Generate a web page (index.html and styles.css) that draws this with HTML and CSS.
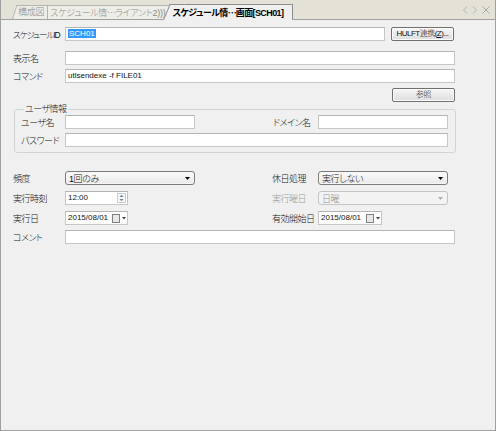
FILE: index.html
```html
<!DOCTYPE html>
<html lang="ja">
<head>
<meta charset="utf-8">
<title>スケジュール情報画面</title>
<link rel="stylesheet" href="styles.css">
</head>
<body>
<div class="frame">
  <div class="tabbar">
    <div class="tabs">
      <div class="tab tab-first">構成図</div>
      <div class="tab tab-second">スケジュール情<span class="ell">…</span>ライアント2)))</div>
      <div class="tab active">スケジュール情<span class="ell">…</span>画面[SCH01]</div>
    </div>
    <div class="tabctl">
      <svg width="30" height="10" viewBox="0 0 30 10">
        <path d="M5 1.5 L1.5 5 L5 8.5" fill="none" stroke="#b4b4b4" stroke-width="1"/>
        <path d="M11 1.5 L14.5 5 L11 8.5" fill="none" stroke="#b4b4b4" stroke-width="1"/>
        <path d="M20.5 1.5 L27.5 8.5 M27.5 1.5 L20.5 8.5" fill="none" stroke="#a8a8a8" stroke-width="1"/>
      </svg>
    </div>
  </div>

  <div class="content">
    <div class="row r1">
      <span class="lbl lbl-id">スケジュールID</span>
      <div class="field w-id"><span class="hl">SCH01</span></div>
      <div class="btn w-btn">HULFT連携(<u>Z</u>)...</div>
    </div>
    <div class="row r2">
      <span class="lbl">表示名</span>
      <div class="field w-full"></div>
    </div>
    <div class="row r3">
      <span class="lbl">コマンド</span>
      <div class="field w-full">utlsendexe -f FILE01</div>
    </div>
    <div class="row r4">
      <div class="btn w-btn">参照</div>
    </div>

    <fieldset class="group">
      <legend>ユーザ情報</legend>
      <div class="row">
        <span class="lbl lbl-in">ユーザ名</span>
        <div class="field w-half"></div>
        <span class="lbl lbl-right">ドメイン名</span>
        <div class="field w-half"></div>
      </div>
      <div class="row g2">
        <span class="lbl lbl-in">パスワード</span>
        <div class="field w-pass"></div>
      </div>
    </fieldset>

    <div class="sched">
      <span class="lbl">頻度</span>
      <div class="combo w-half"><span>1回のみ</span><svg class="arr" width="5" height="3" viewBox="0 0 5 3"><path d="M0 0H5L2.5 3Z" fill="#000"/></svg></div>
      <span class="lbl">休日処理</span>
      <div class="combo w-half"><span>実行しない</span><svg class="arr" width="5" height="3" viewBox="0 0 5 3"><path d="M0 0H5L2.5 3Z" fill="#000"/></svg></div>

      <span class="lbl">実行時刻</span>
      <div class="field w-small spin">
        <span>12:00</span>
        <svg width="9" height="10" viewBox="0 0 9 10"><rect x="0.5" y="0.5" width="8" height="9" fill="#f4f6f8" stroke="#c9d0d8"/><path d="M2.5 4H6.5L4.5 2Z M2.5 6H6.5L4.5 8Z" fill="#6c7f96"/></svg>
      </div>
      <span class="lbl dis">実行曜日</span>
      <div class="combo w-half disabled"><span>日曜</span><svg class="arr" width="5" height="3" viewBox="0 0 5 3"><path d="M0 0H5L2.5 3Z" fill="#b0b0b0"/></svg></div>

      <span class="lbl">実行日</span>
      <div class="field w-small date">
        <span>2015/08/01</span>
        <svg width="14" height="9" viewBox="0 0 14 9"><rect x="0.5" y="0.5" width="7" height="8" fill="#e8e8e8" stroke="#808080"/><path d="M10 3H14L12 5.5Z" fill="#404040"/></svg>
      </div>
      <span class="lbl">有効開始日</span>
      <div class="field w-date2 date">
        <span>2015/08/01</span>
        <svg width="14" height="9" viewBox="0 0 14 9"><rect x="0.5" y="0.5" width="7" height="8" fill="#e8e8e8" stroke="#808080"/><path d="M10 3H14L12 5.5Z" fill="#404040"/></svg>
      </div>
    </div>

    <div class="row r-comment">
      <span class="lbl">コメント</span>
      <div class="field w-full"></div>
    </div>
  </div>
</div>
</body>
</html>
```

FILE: styles.css
```css
* { box-sizing: border-box; }
html, body { margin: 0; padding: 0; }
body {
  width: 496px;
  height: 431px;
  overflow: hidden;
  background: #f0f0f0;
  font-family: "Liberation Sans", "Noto Sans CJK JP", sans-serif;
  font-size: 9px;
  font-weight: 300;
  color: #111;
  font-feature-settings: "palt";
}
.frame {
  width: 496px;
  height: 431px;
  border: 1px solid #a0a0a0;
  border-top: none;
  display: flex;
  flex-direction: column;
}

/* tab bar */
.tabbar {
  height: 20px;
  flex: none;
  background: #e4e1d6;
  border-bottom: 1px solid #a0a0a0;
  display: flex;
  align-items: flex-end;
  justify-content: space-between;
}
.tabs {
  display: flex;
  align-items: flex-end;
  height: 100%;
  padding-left: 16px;
}
.tab {
  position: relative;
  z-index: 1;
  height: 14px;
  line-height: 13px;
  padding: 0 3px 0 1px;
  white-space: nowrap;
  letter-spacing: -0.25px;
  color: #8c8c8c;
  background: #eeede7;
  border-top: 1px solid #b4b4b4;
  border-right: 1px solid #b4b4b4;
}
.ell { font-family: "Noto Sans CJK JP", sans-serif; letter-spacing: -1px; }
.tab-first::before {
  content: "";
  position: absolute;
  z-index: -1;
  left: -5px;
  top: -1px;
  bottom: 0;
  width: 12px;
  background: #eeede7;
  border-left: 1px solid #b4b4b4;
  border-top: 1px solid #b4b4b4;
  transform: skewX(-18deg);
  transform-origin: bottom left;
}
.tab-second {
  padding-left: 2px;
  padding-right: 6px;
}
.tab.active {
  z-index: 2;
  height: 16px;
  line-height: 15px;
  margin-bottom: -1px;
  margin-left: -3px;
  padding: 0 9px 0 3px;
  color: #000;
  font-weight: bold;
  letter-spacing: -0.6px;
  background: #f0f0f0;
  border-top-color: #8c8c8c;
  border-right-color: #8c8c8c;
}
.tab.active::before {
  content: "";
  position: absolute;
  z-index: -1;
  left: -7px;
  top: -1px;
  bottom: 0;
  width: 14px;
  background: #f0f0f0;
  border-left: 1px solid #8c8c8c;
  border-top: 1px solid #8c8c8c;
  transform: skewX(-23deg);
  transform-origin: bottom left;
}
.tabctl {
  align-self: center;
  margin-right: 3px;
  display: flex;
}

/* form */
.content {
  flex: 1;
  padding: 7px 0 0 12px;
}
.row {
  display: flex;
  align-items: center;
  height: 14px;
}
.lbl {
  flex: none;
  width: 52px;
  white-space: nowrap;
  letter-spacing: -0.5px;
}
.lbl-id { font-size: 8.5px; letter-spacing: -1.1px; }
.field {
  flex: none;
  height: 14px;
  background: #fff;
  border: 1px solid #c6c6c6;
  border-top-color: #b4b4b4;
  font-size: 8px;
  line-height: 12px;
  padding: 0 2px;
  white-space: nowrap;
  overflow: hidden;
}
.hl {
  background: #3399ff;
  color: #fff;
  padding: 0 1px;
}
.w-id { width: 320px; }
.w-full { width: 390px; }
.w-half { width: 130px; }
.w-pass { width: 383px; }
.w-small { width: 63px; }
.w-date2 { width: 64px; }
.w-btn { width: 63px; }

.btn {
  flex: none;
  height: 14px;
  border: 1px solid #707070;
  border-radius: 2px;
  background: linear-gradient(#f6f6f6, #dedede);
  box-shadow: inset 0 0 0 1px #fbfbfb;
  text-align: center;
  line-height: 12px;
  font-size: 8px;
  letter-spacing: -0.5px;
  white-space: nowrap;
}
.r1 .btn { margin-left: 6px; }
.r2 { margin-top: 10px; }
.r3 { margin-top: 4px; }
.r4 { margin-top: 5px; justify-content: flex-end; width: 442px; }

.group {
  margin: 1px 0 0 1px;
  width: 442px;
  padding: 0 0 5px 6px;
  border: 1px solid #d4d4d4;
  border-radius: 3px;
}
.group legend {
  padding: 0 1px;
  margin-left: 3px;
  line-height: 12px;
  letter-spacing: -0.5px;
}
.group .g2 { margin-top: 4px; }
.lbl-in { width: 44px; }
.lbl-right { width: 45px; margin-left: 78px; }

.sched {
  margin-top: 18px;
  display: grid;
  grid-template-columns: 52px 207px 46px 130px;
  grid-auto-rows: 14px;
  row-gap: 6px;
  align-items: center;
  justify-items: start;
}
.combo {
  height: 14px;
  border: 1px solid #7c7c7c;
  border-radius: 3px;
  background: linear-gradient(#fbfbfb, #e9e9e9);
  box-shadow: inset 0 0 0 1px #f6f6f6;
  display: flex;
  align-items: center;
  justify-content: space-between;
  padding: 0 4px 0 3px;
  white-space: nowrap;
  letter-spacing: -0.4px;
}
.combo.disabled {
  border-color: #c4c4c4;
  background: #f3f3f3;
  box-shadow: none;
  color: #8e8e8e;
}
.dis { color: #9a9a9a; }
.spin, .date {
  display: flex;
  align-items: center;
  justify-content: space-between;
  padding-right: 1px;
}
.r-comment { margin-top: 5px; }
```
